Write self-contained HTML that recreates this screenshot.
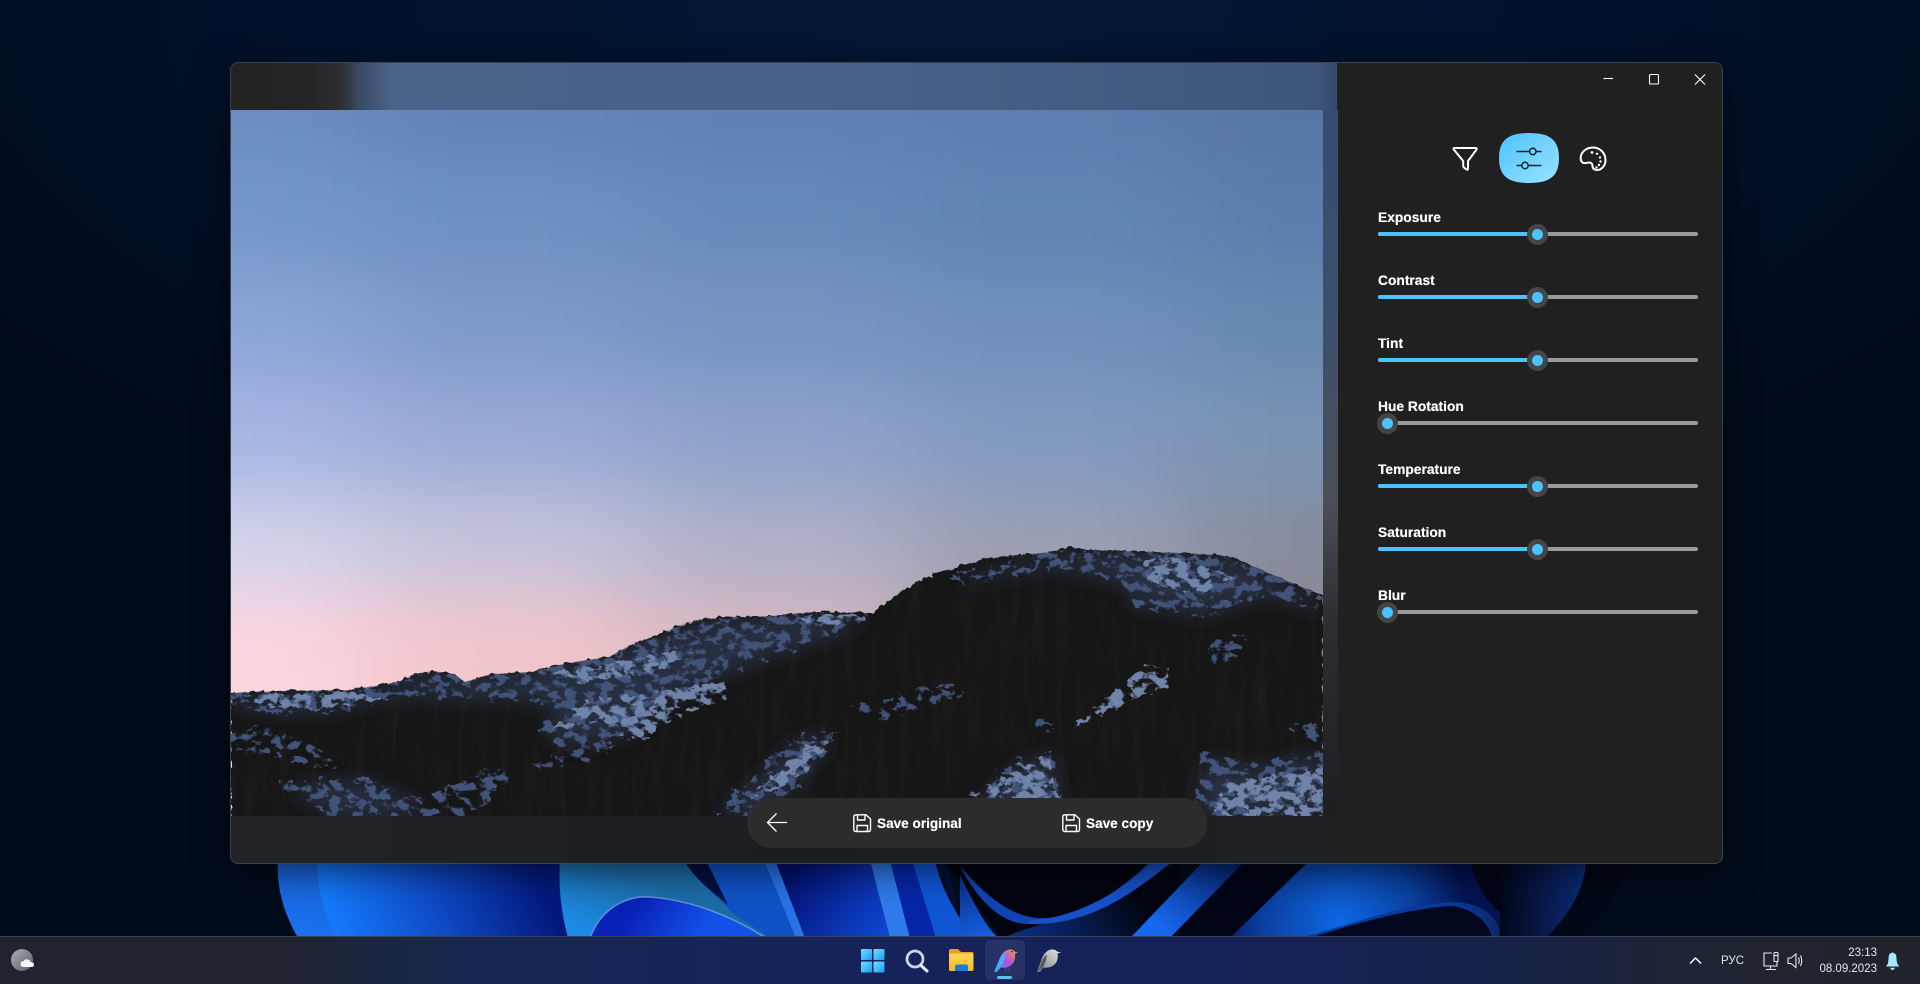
<!DOCTYPE html>
<html><head><meta charset="utf-8"><title>Photo editor</title>
<style>
html,body{margin:0;padding:0;width:1920px;height:984px;overflow:hidden;background:#020b1c}
body{position:relative;font-family:"Liberation Sans",sans-serif;color:#fff}
.a{position:absolute}
.lbl{position:absolute;left:1378px;font-weight:bold;font-size:13.8px;line-height:18px;color:#fff;text-shadow:0 0 .5px #fff;margin-top:1px}
.tr{position:absolute;left:1378px;width:320px;height:4px;background:#9a9a9a;border-radius:2px}
.fill{position:absolute;left:0;top:0;width:150px;height:4px;background:#4cc2ff;border-radius:2px 0 0 2px}
.th{position:absolute;width:21px;height:21px;border-radius:50%;background:#454545;top:-8.5px}
.th i{position:absolute;left:5px;top:5px;width:11px;height:11px;border-radius:50%;background:#4cc2ff}
.mid .th{left:149px}
.zero .th{left:-1.5px}
.txt{position:absolute;font-weight:bold;font-size:13.6px;line-height:18px;color:#fff;text-shadow:0 0 .5px #fff}
.tray{position:absolute;font-size:11.5px;line-height:14px;color:#e6e8ec;text-align:right}
</style></head>
<body>
<div class="a" style="left:0;top:0;width:1920px;height:984px;background:radial-gradient(ellipse 1200px 560px at 50% 0%,#031734 0%,#03112b 55%,#020b1c 100%)"></div>

<svg class="a" style="left:0;top:0" width="1920" height="984" viewBox="0 0 1920 984">
<defs>
<linearGradient id="b1" x1="0" y1="1" x2="1" y2="0"><stop offset="0" stop-color="#1b74f2"/><stop offset="1" stop-color="#1650c0"/></linearGradient>
<linearGradient id="b2" gradientUnits="userSpaceOnUse" x1="340" y1="936" x2="540" y2="870"><stop offset="0" stop-color="#1478f8"/><stop offset=".45" stop-color="#0f4cc8"/><stop offset="1" stop-color="#03187c"/></linearGradient>
<linearGradient id="b3" gradientUnits="userSpaceOnUse" x1="620" y1="870" x2="590" y2="936"><stop offset="0" stop-color="#1d6ba6"/><stop offset="1" stop-color="#1a8ce8"/></linearGradient>
<linearGradient id="b4" gradientUnits="userSpaceOnUse" x1="640" y1="900" x2="700" y2="936"><stop offset="0" stop-color="#0a22b8"/><stop offset="1" stop-color="#1250e8"/></linearGradient>
<linearGradient id="b5" gradientUnits="userSpaceOnUse" x1="790" y1="870" x2="880" y2="936"><stop offset="0" stop-color="#040f70"/><stop offset="1" stop-color="#0d45d0"/></linearGradient>
<linearGradient id="b6" gradientUnits="userSpaceOnUse" x1="1170" y1="936" x2="1240" y2="864"><stop offset="0" stop-color="#1668ee"/><stop offset="1" stop-color="#05206a"/></linearGradient>
<radialGradient id="b7" gradientUnits="userSpaceOnUse" cx="1340" cy="925" r="130"><stop offset="0" stop-color="#0e68e6"/><stop offset=".6" stop-color="#0a3f9e"/><stop offset="1" stop-color="#031250"/></radialGradient>
<linearGradient id="b8" gradientUnits="userSpaceOnUse" x1="1450" y1="905" x2="1500" y2="930"><stop offset="0" stop-color="#0a3a9c"/><stop offset="1" stop-color="#0a2768"/></linearGradient>
<linearGradient id="b9" gradientUnits="userSpaceOnUse" x1="1500" y1="900" x2="1590" y2="900"><stop offset="0" stop-color="#020618"/><stop offset="1" stop-color="#0c2e7e"/></linearGradient>
<linearGradient id="b10" gradientUnits="userSpaceOnUse" x1="1030" y1="940" x2="1130" y2="880"><stop offset="0" stop-color="#0d3ca8"/><stop offset="1" stop-color="#020412"/></linearGradient>
<linearGradient id="b11" gradientUnits="userSpaceOnUse" x1="960" y1="870" x2="990" y2="936"><stop offset="0" stop-color="#0a2a80"/><stop offset="1" stop-color="#1560e0"/></linearGradient>
</defs>
<path d="M278,860C276,890 285,915 298,938L580,938L580,860Z" fill="url(#b1)"/>
<path d="M318,860C316,890 325,915 336,938L575,938L565,860Z" fill="url(#b2)"/>
<path d="M560,860C558,890 562,915 568,938L775,938L700,860Z" fill="url(#b3)"/>
<path d="M684,860C695,880 715,895 735,915L770,938L825,938L785,860Z" fill="#0f52c6"/>
<path d="M684,860C694,878 708,888 728,905L706,860Z" fill="#031040"/>
<path d="M764,860L785,860L813,938L796,938Z" fill="#2a72e6"/>
<path d="M590,938C600,910 625,895 650,897C690,900 730,915 766,938Z" fill="url(#b4)"/>
<path d="M590,938C600,910 625,895 650,897C690,900 730,915 766,938" fill="none" stroke="#5f8fe0" stroke-width="1.6"/>
<path d="M775,860L870,860L890,938L805,938Z" fill="url(#b5)"/>
<path d="M870,860L890,860L910,938L890,938Z" fill="#2f7aea"/>
<path d="M890,860L912,860L940,938L910,938Z" fill="#0626a8"/>
<path d="M912,860L935,860C940,885 955,915 975,938L936,938Z" fill="#0f55d4"/>
<path d="M935,860C945,880 950,900 960,912L945,860Z" fill="#021038"/>
<path d="M945,860L1180,860L1180,938L1002,938C985,915 965,890 945,860Z" fill="#02040f"/>
<path d="M960,875C972,900 990,935 1000,938L960,938Z" fill="url(#b11)"/>
<path d="M960,866C980,905 1005,925 1030,924C1090,925 1130,895 1172,862L1150,862C1120,890 1075,925 1030,917C1005,912 980,890 960,866Z" fill="#0f44b4"/>
<path d="M1005,938C1020,925 1100,920 1170,860L1178,860L1132,938Z" fill="url(#b10)" opacity=".7"/>
<path d="M1030,924C1090,925 1130,895 1172,862L1155,862C1120,890 1080,918 1030,920Z" fill="#1850c8"/>
<path d="M1170,938L1246,860L1205,860L1130,938Z" fill="url(#b6)"/>
<path d="M1170,938L1246,860L1500,860L1500,938Z" fill="#020516"/>
<path d="M1230,938L1310,860L1470,860C1475,880 1480,895 1500,912L1500,938Z" fill="url(#b7)"/>
<path d="M1300,938C1350,925 1400,905 1451,902C1480,902 1500,915 1500,938L1460,938Z" fill="#04081e"/>
<path d="M1300,938C1350,925 1400,905 1451,902C1480,902 1500,915 1500,938L1492,938C1490,925 1475,908 1451,906C1410,908 1350,925 1310,938Z" fill="url(#b8)"/>
<path d="M1500,860L1586,860C1586,890 1565,920 1546,938L1500,938Z" fill="url(#b9)"/>
<path d="M1586,860L1630,860C1620,890 1600,920 1580,938L1546,938C1565,920 1586,890 1586,860Z" fill="#020716"/>
</svg>

<!-- window -->
<div class="a" style="left:230px;top:62px;width:1491px;height:800px;border:1px solid #3b4250;border-radius:8px;box-shadow:0 8px 34px rgba(0,0,0,.55);overflow:hidden;background:#202020">
  <svg class="a" style="left:-231px;top:-63px" width="1920" height="984" viewBox="0 0 1920 984">
    <defs>
      <filter id="skyb" x="-20%" y="-20%" width="140%" height="140%"><feGaussianBlur stdDeviation="60 34"/></filter>
      <filter id="soft" x="-10%" y="-10%" width="120%" height="120%"><feGaussianBlur stdDeviation="10"/></filter>
      <filter id="edge" x="-2%" y="-5%" width="104%" height="110%"><feTurbulence type="fractalNoise" baseFrequency="0.14" numOctaves="3" seed="11" result="n"/><feDisplacementMap in="SourceGraphic" in2="n" scale="6"/></filter>
      <filter id="frag" x="-5%" y="-5%" width="110%" height="110%" color-interpolation-filters="sRGB">
        <feTurbulence type="fractalNoise" baseFrequency="0.085 0.12" numOctaves="4" seed="3" result="n"/>
        <feDisplacementMap in="SourceGraphic" in2="n" scale="14" result="d"/>
        <feColorMatrix in="n" values="0 0 0 0 1  0 0 0 0 1  0 0 0 0 1  9 0 0 0 -4.4" result="m"/>
        <feComposite in="d" in2="m" operator="in"/>
      </filter>
      <filter id="frag2" x="-5%" y="-5%" width="110%" height="110%" color-interpolation-filters="sRGB">
        <feTurbulence type="fractalNoise" baseFrequency="0.09 0.12" numOctaves="4" seed="21" result="n"/>
        <feDisplacementMap in="SourceGraphic" in2="n" scale="10" result="d"/>
        <feColorMatrix in="n" values="0 0 0 0 1  0 0 0 0 1  0 0 0 0 1  9 0 0 0 -3.9" result="m"/>
        <feComposite in="d" in2="m" operator="in"/>
      </filter>
      <filter id="streak" x="0" y="0" width="100%" height="100%" color-interpolation-filters="sRGB"><feTurbulence type="fractalNoise" baseFrequency="0.09 0.012" numOctaves="3" seed="9"/><feColorMatrix values="0 0 0 0 .22  0 0 0 0 .17  0 0 0 0 .16  2 0 0 0 -.9"/></filter>
      <clipPath id="im"><rect x="231" y="110" width="1092" height="706"/></clipPath>
      <linearGradient id="tb" gradientUnits="userSpaceOnUse" x1="231" x2="1337" y1="0" y2="0">
        <stop offset="0" stop-color="#222222"/><stop offset=".075" stop-color="#242527"/><stop offset=".1" stop-color="#2e3035"/><stop offset=".117" stop-color="#3b4b66"/><stop offset=".146" stop-color="#4b6388"/><stop offset=".5" stop-color="#4a628a"/><stop offset=".98" stop-color="#3f567c"/><stop offset="1" stop-color="#35496b"/>
      </linearGradient>
      <linearGradient id="strip" x1="0" y1="0" x2="0" y2="1">
        <stop offset="0" stop-color="#364c70"/><stop offset=".3" stop-color="#3d506c"/><stop offset=".55" stop-color="#4c5058"/><stop offset=".72" stop-color="#2d2e33"/><stop offset="1" stop-color="#1d1e22"/>
      </linearGradient>
      <linearGradient id="bb" gradientUnits="userSpaceOnUse" x1="231" x2="1337" y1="0" y2="0">
        <stop offset="0" stop-color="#212329"/><stop offset=".5" stop-color="#1b1d22"/><stop offset="1" stop-color="#1f2023"/>
      </linearGradient>
      <clipPath id="mtc"><path d="M231,693L272,691L349,690L398,682L414,674L433,671L447,673L455,675L465,682L490,674L532,672L567,663L609,657L630,645L658,635L685,623L714,618L770,616L812,612L872,613L904,590L925,578L939,572L960,566L988,558L1051,552L1069,547L1090,550L1156,552L1205,554L1233,557L1250,565L1269,573L1296,585L1323,595L1323,816L231,816Z"/></clipPath>
    </defs>
    <rect x="231" y="63" width="1106" height="47" fill="url(#tb)"/>
    <rect x="1323" y="110" width="15" height="706" fill="url(#strip)"/>
    <rect x="231" y="816" width="1106" height="48" fill="url(#bb)"/>
    <g clip-path="url(#im)">
      <g filter="url(#skyb)">
          <rect x="30" y="-50" width="335" height="215" fill="#6a8cc0"/><rect x="365" y="-50" width="270" height="215" fill="#6484b8"/><rect x="635" y="-50" width="275" height="215" fill="#5f7fb4"/><rect x="910" y="-50" width="275" height="215" fill="#5c7cae"/><rect x="1185" y="-50" width="350" height="215" fill="#5677a5"/>
          <rect x="30" y="165" width="335" height="110" fill="#7497c9"/><rect x="365" y="165" width="270" height="110" fill="#6e90c2"/><rect x="635" y="165" width="275" height="110" fill="#678abb"/><rect x="910" y="165" width="275" height="110" fill="#6285b5"/><rect x="1185" y="165" width="350" height="110" fill="#5c7dac"/>
          <rect x="30" y="275" width="335" height="110" fill="#8ca5d8"/><rect x="365" y="275" width="270" height="110" fill="#7f9aca"/><rect x="635" y="275" width="275" height="110" fill="#7794c3"/><rect x="910" y="275" width="275" height="110" fill="#7090bb"/><rect x="1185" y="275" width="350" height="110" fill="#688ab0"/>
          <rect x="30" y="385" width="335" height="110" fill="#a7b6e3"/><rect x="365" y="385" width="270" height="110" fill="#9aaad6"/><rect x="635" y="385" width="275" height="110" fill="#8ea2cb"/><rect x="910" y="385" width="275" height="110" fill="#829ac0"/><rect x="1185" y="385" width="350" height="110" fill="#7993b2"/>
          <rect x="30" y="495" width="335" height="100" fill="#d2d4ea"/><rect x="365" y="495" width="270" height="100" fill="#c4c4dc"/><rect x="635" y="495" width="275" height="100" fill="#aeb0c8"/><rect x="910" y="495" width="275" height="100" fill="#9a9fb2"/><rect x="1185" y="495" width="350" height="100" fill="#868d9c"/>
          <rect x="30" y="595" width="335" height="300" fill="#fcd6df"/><rect x="365" y="595" width="270" height="300" fill="#f2c6cb"/><rect x="635" y="595" width="275" height="300" fill="#d8b8be"/><rect x="910" y="595" width="275" height="300" fill="#a9a0a8"/><rect x="1185" y="595" width="350" height="300" fill="#8a8890"/>
      </g>
      <!-- mountain -->
      <g filter="url(#edge)">
        <path d="M231,693L272,691L349,690L398,682L414,674L433,671L447,673L455,675L465,682L490,674L532,672L567,663L609,657L630,645L658,635L685,623L714,618L770,616L812,612L872,613L904,590L925,578L939,572L960,566L988,558L1051,552L1069,547L1090,550L1156,552L1205,554L1233,557L1250,565L1269,573L1296,585L1323,595L1323,830L231,830Z" fill="#151318"/>
      </g>
      <g clip-path="url(#mtc)"><rect x="231" y="547" width="1092" height="269" filter="url(#streak)" opacity=".3"/></g>
      <g clip-path="url(#mtc)">
      <g filter="url(#soft)">
        <g transform="translate(230,520) scale(.7018,.3333)" fill="#272e40">
          <path d="M0,525L170,515L290,460L370,468L480,435L610,350L690,300L910,285L860,350L780,400L700,470L620,540L570,640L480,680L445,640L470,580L430,540L230,530L150,570L90,580L0,555Z"/>
          <path d="M1040,175L1170,100L1320,100L1440,120L1550,235L1550,270L1480,225L1390,285L1290,255L1270,185L1170,140L1050,190Z"/>
          <path d="M1375,888L1390,720L1470,745L1560,700L1560,888Z"/>
          <path d="M1050,888L1120,745L1170,700L1185,888Z"/>
          <path d="M700,888L805,670L860,640L825,750L760,888Z"/>
          <path d="M80,800L190,785L265,850L285,888L150,888Z"/>
        </g>
      </g>
      <g filter="url(#frag)">
        <g transform="translate(230,520) scale(.7018,.3333)" fill="#42537a">
          <path d="M0,518L170,510L290,452L370,462L480,430L610,345L690,294L915,278L860,350L780,400L700,470L620,540L570,650L480,690L440,640L470,580L430,540L230,530L150,575L90,590L0,555Z"/>
          <path d="M1020,170L1170,92L1320,92L1440,112L1556,226L1556,275L1480,225L1390,295L1290,265L1270,185L1170,140L1050,195Z"/>
          <path d="M1370,888L1385,700L1470,730L1560,690L1560,888Z"/>
          <path d="M1040,888L1120,720L1170,690L1190,888Z"/>
          <path d="M690,888L800,650L870,630L830,750L760,888Z"/>
          <path d="M60,790L190,770L270,840L290,888L140,888Z"/>
          <path d="M270,840L380,740L400,770L350,888L290,888Z"/>
          <path d="M0,640L40,610L110,670L160,720L130,750L50,700L0,690Z"/>
          <path d="M430,730L520,670L560,680L450,760Z"/>
          <path d="M880,560L1030,490L1050,520L930,600Z"/>
          <path d="M1380,400L1420,340L1450,350L1430,430L1390,430Z"/>
          <path d="M1500,620L1560,590L1560,680Z"/>
          <path d="M1140,610L1175,610L1170,660Z"/>
        </g>
      </g>
      <g filter="url(#frag2)">
        <g transform="translate(230,520) scale(.7018,.3333)" fill="#7084aa">
          <path d="M510,540L705,485L710,530L630,590L590,660L555,645L530,600L460,630L480,590Z"/>
          <path d="M1200,625L1305,435L1340,445L1335,495L1225,600Z"/>
          <path d="M1050,835L1120,745L1165,705L1180,840Z"/>
          <path d="M440,470L540,430L620,400L660,390L620,450L500,490Z"/>
          <path d="M1420,790L1560,740L1560,888L1400,888Z"/>
          <path d="M1300,120L1340,105L1430,170L1380,220L1310,195Z"/>
          <path d="M20,530L170,515L230,540L130,565L50,560Z"/>
          <path d="M740,840L820,680L860,650L820,760Z"/>
          <path d="M820,285L910,285L860,315L810,300Z"/>
        </g>
      </g>
      </g>
    </g>
  </svg>
</div>

<!-- side panel -->
<div class="a" style="left:1338px;top:63px;width:384px;height:800px;background:#202020;border-radius:0 7px 7px 0"></div>

<svg class="a" style="left:0;top:0" width="1920" height="984" viewBox="0 0 1920 984">
  <defs>
    <linearGradient id="sel" x1="0" y1="0" x2="1" y2="1"><stop offset="0" stop-color="#4cc2ff"/><stop offset="1" stop-color="#9ae3ff"/></linearGradient>
    <linearGradient id="win" x1="0" y1="0" x2="1" y2="1"><stop offset="0" stop-color="#6fe0ff"/><stop offset="1" stop-color="#1c9cf0"/></linearGradient>
    <linearGradient id="bird" x1="0" y1="1" x2="1" y2="0"><stop offset="0" stop-color="#2e9cf0"/><stop offset=".5" stop-color="#b44fe0"/><stop offset="1" stop-color="#f7a040"/></linearGradient>
    <linearGradient id="gbird" x1="0" y1="1" x2="1" y2="0"><stop offset="0" stop-color="#77787c"/><stop offset="1" stop-color="#e8e8e6"/></linearGradient>
    <linearGradient id="wth" x1="0" y1="0" x2="1" y2="1"><stop offset="0" stop-color="#a8adb6"/><stop offset="1" stop-color="#5a6068"/></linearGradient>
    <linearGradient id="fold" x1="0" y1="0" x2="0" y2="1"><stop offset="0" stop-color="#ffd65c"/><stop offset="1" stop-color="#f7b823"/></linearGradient>
  </defs>
  <path d="M1603.5,78.5H1613" stroke="#fff" stroke-width="1.1"/>
  <rect x="1649.5" y="74.5" width="9" height="9.5" rx="1" fill="none" stroke="#fff" stroke-width="1.1"/>
  <path d="M1695,74.5L1705,84.5M1705,74.5L1695,84.5" stroke="#fff" stroke-width="1.1"/>
  <path d="M1454.5,148H1475.5Q1477.5,148 1476.3,149.8L1468,161V168.5Q1468,170.5 1466.3,169.3L1464,167.5Q1463.2,166.8 1463.2,165.8V161L1454,149.8Q1452.8,148 1454.5,148Z" fill="none" stroke="#fff" stroke-width="2" stroke-linejoin="round"/>
  <path d="M1499,158C1499,140 1508,133 1529,133C1550,133 1559,140 1559,158C1559,176 1550,183 1529,183C1508,183 1499,176 1499,158Z" fill="url(#sel)"/>
  <path d="M1516.5,151.5H1529.5M1536,151.5H1541.5M1516.5,165.5H1521.5M1528.5,165.5H1541.5" stroke="#14202a" stroke-width="1.5" fill="none"/>
  <circle cx="1532.8" cy="151.5" r="3.2" fill="none" stroke="#14202a" stroke-width="1.5"/>
  <circle cx="1525" cy="165.5" r="3.2" fill="none" stroke="#14202a" stroke-width="1.5"/>
  <path d="M1593,147.5C1600,147.5 1605.5,153 1605.5,160C1605.5,166.5 1600.5,170.5 1596.5,170C1593.5,169.6 1592.5,168 1592.5,166C1592.5,163 1590,161.8 1587,162.8C1583.8,163.8 1581,162.5 1580.7,159C1580.2,152.5 1586,147.5 1593,147.5Z" fill="none" stroke="#fff" stroke-width="2"/>
  <g fill="#fff"><circle cx="1592" cy="152.5" r="1.4"/><circle cx="1597" cy="153.8" r="1.2"/><circle cx="1600" cy="157.5" r="1.2"/><circle cx="1600.5" cy="161.5" r="1.2"/><circle cx="1599" cy="165" r="1.2"/><circle cx="1596.5" cy="167.5" r="1.2"/></g>
</svg>

<div class="lbl" style="top:208px">Exposure</div>
<div class="tr mid" style="top:232px"><div class="fill"></div><div class="th"><i></i></div></div>
<div class="lbl" style="top:271px">Contrast</div>
<div class="tr mid" style="top:295px"><div class="fill"></div><div class="th"><i></i></div></div>
<div class="lbl" style="top:334px">Tint</div>
<div class="tr mid" style="top:358px"><div class="fill"></div><div class="th"><i></i></div></div>
<div class="lbl" style="top:397px">Hue Rotation</div>
<div class="tr zero" style="top:421px"><div class="th"><i></i></div></div>
<div class="lbl" style="top:460px">Temperature</div>
<div class="tr mid" style="top:484px"><div class="fill"></div><div class="th"><i></i></div></div>
<div class="lbl" style="top:523px">Saturation</div>
<div class="tr mid" style="top:547px"><div class="fill"></div><div class="th"><i></i></div></div>
<div class="lbl" style="top:586px">Blur</div>
<div class="tr zero" style="top:610px"><div class="th"><i></i></div></div>

<div class="a" style="left:747px;top:798px;width:460px;height:50px;border-radius:25px;background:#2c2c2c"></div>
<div class="txt" style="left:877px;top:815px">Save original</div>
<div class="txt" style="left:1086px;top:815px">Save copy</div>

<div class="a" style="left:0;top:936px;width:1920px;height:48px;border-top:1px solid #3a4358;box-sizing:border-box;background:linear-gradient(90deg,#20242e 0%,#1f2430 15%,#16264f 24%,#15235a 45%,#15225a 62%,#172148 78%,#1e2433 88%,#202329 100%)"></div>
<div class="a" style="left:985px;top:940px;width:40px;height:40px;background:rgba(255,255,255,.07);border-radius:5px"></div>
<div class="a" style="left:997px;top:976px;width:15px;height:3px;background:#5cbcf5;border-radius:2px"></div>
<div class="tray" style="left:1714.5px;top:954px;width:36px;text-align:center">РУС</div>
<div class="tray" style="left:1799px;top:946px;width:78px">23:13</div>
<div class="tray" style="left:1799px;top:962px;width:78px">08.09.2023</div>

<svg class="a" style="left:0;top:0" width="1920" height="984" viewBox="0 0 1920 984">
  <path d="M787,822.5H768M776.5,813.5L767.5,822.5L776.5,831.5" fill="none" stroke="#fff" stroke-width="1.3"/>
  <g fill="none" stroke="#fff" stroke-width="1.4" stroke-linejoin="round">
    <path d="M856,814.8H866L870.5,819V829.5Q870.5,831.5 868.5,831.5H856Q853.8,831.5 853.8,829.5V817Q853.8,814.8 856,814.8Z"/>
    <path d="M857.5,815V820H865V815M857,831.5V825.5H867.5V831.5"/>
    <path d="M1065,814.8H1075L1079.5,819V829.5Q1079.5,831.5 1077.5,831.5H1065Q1062.8,831.5 1062.8,829.5V817Q1062.8,814.8 1065,814.8Z"/>
    <path d="M1066.5,815V820H1074V815M1066,831.5V825.5H1076.5V831.5"/>
  </g>
  <circle cx="22" cy="960" r="11" fill="url(#wth)"/>
  <path d="M24,967Q20.5,967 20.5,964Q20.5,961.5 23.5,961.3Q25,958.5 28,959.5Q30,960 30.3,962Q34,962 34,964.8Q34,967 31.5,967Z" fill="#f3f4f6"/>
  <g fill="url(#win)"><rect x="861" y="949" width="11" height="11" rx="1"/><rect x="873.5" y="949" width="11" height="11" rx="1"/><rect x="861" y="961.5" width="11" height="11" rx="1"/><rect x="873.5" y="961.5" width="11" height="11" rx="1"/></g>
  <circle cx="915" cy="959" r="8" fill="none" stroke="#cdd4e4" stroke-width="2.8"/>
  <path d="M921,965.5L927,971" stroke="#e8ebf2" stroke-width="3" stroke-linecap="round"/>
  <path d="M949,951Q949,949 951,949H958L961,952H972Q973.5,952 973.5,953.5V958H949Z" fill="#e5a21a"/>
  <rect x="949" y="953.5" width="24.5" height="17.5" rx="1.5" fill="url(#fold)"/>
  <path d="M955,971V966.5Q955,964.5 957,964.5H966Q968,964.5 968,966.5V971Z" fill="#1a7fc4"/>
  <path d="M994,972L999,960Q1002,951 1009,949.5Q1013,949 1014.5,951.5L1018,952.5L1015,953.5Q1016,962 1010,966Q1006,968.5 1001,967.5L997,972Z" fill="url(#bird)"/>
  <path d="M994.5,972L1000,959Q1002,954 1006,953Q1004.5,961 1001,966Z" fill="#38b6f5"/>
  <circle cx="1012" cy="951.5" r=".8" fill="#222"/>
  <path d="M1006,968V971M1009,967.5V971" stroke="#4a4e62" stroke-width="1"/>
  <path d="M1037,972L1041,961Q1044,951 1051,949.5Q1055,949 1057,951.5L1061,952.5L1057.5,953.5Q1059,962 1052.5,966Q1048,968.5 1043,967.5L1040,972Z" fill="url(#gbird)"/>
  <path d="M1038,972L1042,961Q1044,956 1047,955Q1046,962 1043,967Z" fill="#55565a"/>
  <path d="M1048,968V972M1052,967V971.5" stroke="#222" stroke-width="1"/>
  <path d="M1690,963.5L1695.5,958L1701,963.5" fill="none" stroke="#fff" stroke-width="1.5"/>
  <g fill="none" stroke="#e8eaee" stroke-width="1.1">
    <path d="M1772,953H1764V966H1777V962"/><path d="M1770.5,966V969.5M1766,969.5H1776"/>
    <rect x="1774" y="952.5" width="4" height="9" rx=".8"/><path d="M1774,955.5H1778"/>
    <path d="M1788,958H1791L1796,954V967.5L1791,963.5H1788Z"/>
    <path d="M1798.5,957.5Q1800,960.8 1798.5,964M1800.5,955.5Q1803,960.8 1800.5,966"/>
  </g>
  <path d="M1886,966.5Q1888.5,964 1888.5,958.5Q1888.5,953 1892.5,952.5Q1896.5,953 1896.5,958.5Q1896.5,964 1899.5,966.5Z" fill="#a8e6ff"/>
  <path d="M1890,967.8H1895Q1894,970 1892.5,970Q1891,970 1890,967.8Z" fill="#a8e6ff"/>
</svg>
</body></html>
